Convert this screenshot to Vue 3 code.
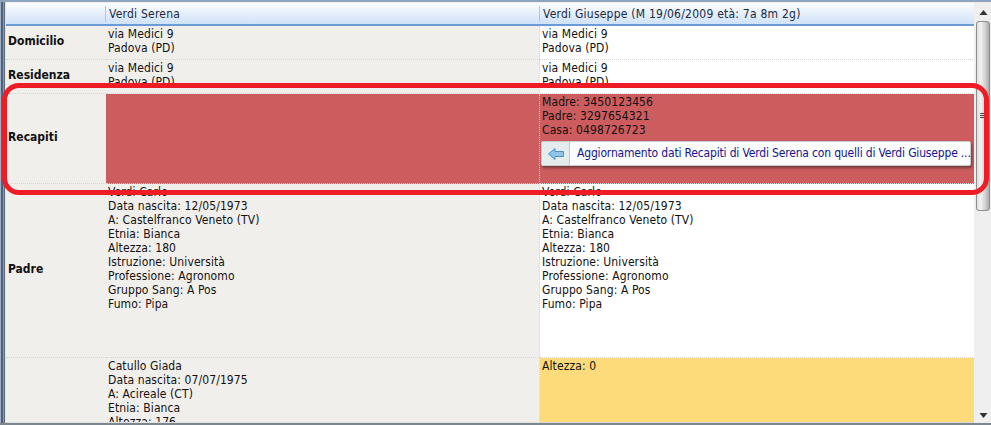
<script setup>
const padre = ['Verdi Carlo','Data nascita: 12/05/1973','A: Castelfranco Veneto (TV)','Etnia: Bianca','Altezza: 180','Istruzione: Università','Professione: Agronomo','Gruppo Sang: A Pos','Fumo: Pipa']
const madre = ['Catullo Giada','Data nascita: 07/07/1975','A: Acireale (CT)','Etnia: Bianca','Altezza: 176']
const ind = ['via Medici 9','Padova (PD)']
const rec = ['Madre: 3450123456','Padre: 3297654321','Casa: 0498726723']
</script>

<template>
  <div class="win">
    <div class="main">
      <div class="head">
        <div class="hcell first"></div>
        <div class="hcell">Verdi Serena</div>
        <div class="hcell">Verdi Giuseppe (M 19/06/2009 età: 7a 8m 2g)</div>
      </div>
      <div class="row r1">
        <div class="lab">Domicilio</div>
        <div class="c grey"><div v-for="l in ind" :key="l">{{ l }}</div></div>
        <div class="c"><div v-for="l in ind" :key="l">{{ l }}</div></div>
      </div>
      <div class="row r2">
        <div class="lab">Residenza</div>
        <div class="c grey"><div v-for="l in ind" :key="l">{{ l }}</div></div>
        <div class="c"><div v-for="l in ind" :key="l">{{ l }}</div></div>
      </div>
      <div class="row r3">
        <div class="lab">Recapiti</div>
        <div class="c red"></div>
        <div class="c red">
          <div v-for="l in rec" :key="l">{{ l }}</div>
          <div class="btn">
            <span class="ico">
              <svg width="18" height="14" viewBox="0 0 18 14">
                <path d="M1.5 7 L8 1.5 V4.5 H16.5 V9.5 H8 V12.5 Z" fill="#8fc4ea" stroke="#4a8fc8" stroke-width="1"/>
              </svg>
            </span>
            <span class="btxt">Aggiornamento dati Recapiti di Verdi Serena con quelli di Verdi Giuseppe ...</span>
          </div>
        </div>
      </div>
      <div class="row r4">
        <div class="lab">Padre</div>
        <div class="c grey"><div v-for="l in padre" :key="l">{{ l }}</div></div>
        <div class="c"><div v-for="l in padre" :key="l">{{ l }}</div></div>
      </div>
      <div class="row r5">
        <div class="lab"></div>
        <div class="c grey"><div v-for="l in madre" :key="l">{{ l }}</div></div>
        <div class="c yellow"><div>Altezza: 0</div></div>
      </div>
    </div>
    <div class="sb">
      <svg class="arr" width="9" height="5" viewBox="0 0 9 5"><path d="M4.5 0 L8.5 5 H0.5 Z" fill="#333"/></svg>
      <div class="thumb"><span></span><span></span><span></span></div>
      <div class="track"></div>
      <svg class="arr" width="9" height="5" viewBox="0 0 9 5"><path d="M0.5 0 H8.5 L4.5 5 Z" fill="#333"/></svg>
    </div>
    <div class="hl"></div>
  </div>
</template>

<style scoped>
.win {
  position: relative;
  width: 991px;
  height: 425px;
  box-sizing: border-box;
  display: flex;
  overflow: hidden;
  background: #f1efec;
  padding: 1px 0 2px 6px;
  border-top: 2px solid #8ea3c0;
  font-family: "DejaVu Sans Condensed", "DejaVu Sans", sans-serif;
  font-size: 12px;
  letter-spacing: .1px;
  line-height: 14px;
  color: #111;
  box-shadow: inset 0 -2px 0 #7d8790, inset 1px 0 0 #a3b0c2, inset 3px 0 0 #4c6283, inset 4px 0 0 #8c98a6, inset 5px 0 0 #5f6a76, inset 6px 0 0 #e8e6e3;
}
.main { width: 969px; display: flex; flex-direction: column; overflow: hidden; background: #f1efec; }
.head {
  flex: none;
  display: grid;
  grid-template-columns: 99px 434px 436px;
  background: linear-gradient(#fbfdff, #cfe2f8);
  border-bottom: 2px solid #6b9bd6;
  box-sizing: border-box;
  height: 23px;
  letter-spacing: .23px;
}
.hcell { padding-left: 3px; border-left: 1px solid #a9c7ea; margin: 3px 0 2px; line-height: 16px; color: #1b2a40; }
.hcell.first { border-left: 0; }
.row {
  display: grid;
  grid-template-columns: 100px 434px 435px;
  flex: none;
  overflow: hidden;
}
.r1 { height: 34px; }
.r2 { height: 34px; }
.r3 { height: 90px; }
.r4 { height: 174px; }
.r5 { flex: 1; min-height: 0; }
.lab {
  display: flex;
  align-items: center;
  padding: 0 0 3px 2px;
  box-sizing: border-box;
  font-weight: 700;
  letter-spacing: 0;
  border-bottom: 1px dotted #d8d6d2;
}
.c {
  padding: 1px 0 0 2px;
  background: #fff;
  border-bottom: 1px dotted #d8d6d2;
  border-right: 1px dotted #d8d6d2;
  box-sizing: border-box;
  overflow: hidden;
}
.grey { background: #f1efec; }
.red { background: #cd5c5e; }
.yellow { background: #fddb7a; }
.btn {
  display: flex;
  align-items: stretch;
  height: 25px;
  margin: 4px 0 0 -1px;
  width: 430px;
  background: #fbfcfd;
  border: 1px solid #c8ccd0;
  border-radius: 2px;
  box-sizing: border-box;
  box-shadow: 1px 2px 3px rgba(40, 30, 30, .55);
}
.ico {
  width: 27px;
  flex: none;
  background: #e4ecee;
  border-right: 1px solid #c4c8ca;
  display: flex;
  align-items: center;
  justify-content: center;
}
.btxt { padding-left: 7px; color: #14148c; line-height: 22px; white-space: nowrap; letter-spacing: -.17px; }
.sb {
  flex: none;
  width: 16px;
  margin-left: 1px;
  background: #efefef;
  display: flex;
  flex-direction: column;
  align-items: center;
  padding: 7px 0 5px;
  box-sizing: border-box;
}
.arr { flex: none; }
.thumb {
  flex: none;
  width: 14px;
  height: 190px;
  margin-top: 6px;
  padding-bottom: 2px;
  box-sizing: border-box;
  border: 1px solid #8e8e8e;
  border-radius: 3px;
  background: linear-gradient(90deg, #dedede, #f2f2f2 30%, #d0d0d0 70%, #aaa);
  display: flex;
  flex-direction: column;
  align-items: center;
  justify-content: center;
  gap: 1px;
}
.thumb span { width: 7px; height: 1px; background: #444; }
.track { flex: 1; }
.hl {
  position: absolute;
  left: 2px;
  top: 81px;
  width: 987px;
  height: 112px;
  box-sizing: border-box;
  border: 5px solid #ee1c25;
  border-radius: 17px;
}
</style>
